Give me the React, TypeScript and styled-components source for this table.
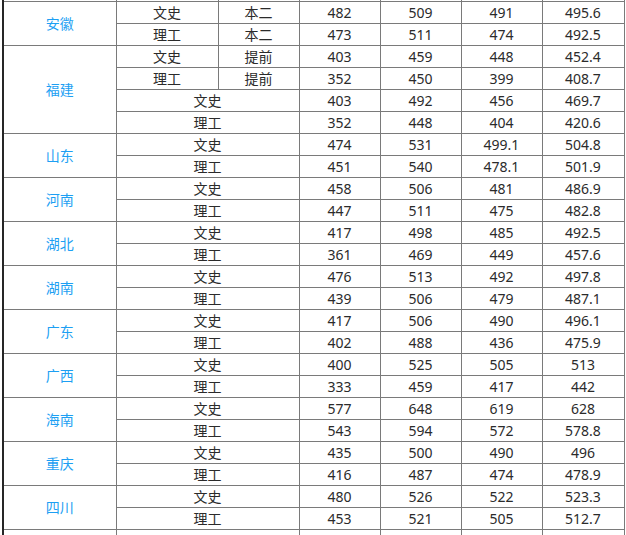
import React from 'react'
import styled, { createGlobalStyle } from 'styled-components'

interface Line {
  subject: string
  batch?: string
  scores: string[]
}

interface Province {
  name: string
  lines: Line[]
}

const GlobalStyle = createGlobalStyle`
  html, body {
    margin: 0;
    padding: 0;
    background: #fff;
    overflow: hidden;
  }
  body {
    font-family: "Noto Sans", "Noto Sans CJK SC", sans-serif;
  }
`

const Frame = styled.div`
  width: 626px;
  height: 535px;
  overflow: hidden;
  padding-left: 2px;
  box-sizing: border-box;
`

const Sheet = styled.div`
  border-left: 2px solid #262626;
  width: 621px;
  overflow: hidden;
`

const Table = styled.table`
  border-collapse: collapse;
  table-layout: fixed;
  width: 620px;
  margin-top: -21px;
  color: #2b2b2b;
  font-size: 14px;
  line-height: 16px;
`

const Cell = styled.td<{ $area?: boolean }>`
  border: 1px solid #7a7a7a;
  height: 21px;
  padding: 0;
  text-align: center;
  vertical-align: middle;
  box-sizing: border-box;
  white-space: nowrap;
  color: ${({ $area }) => ($area ? '#1d9ff3' : 'inherit')};

  &:first-child {
    border-left: 0;
  }
`

const Row = styled.tr`
  height: 22px;
`

// first and last entries are the rows cut by the window edges: only their lines show
const provinces: Province[] = [
  {
    name: '',
    lines: [{ subject: '', batch: '', scores: ['', '', '', ''] }],
  },
  {
    name: '安徽',
    lines: [
      { subject: '文史', batch: '本二', scores: ['482', '509', '491', '495.6'] },
      { subject: '理工', batch: '本二', scores: ['473', '511', '474', '492.5'] },
    ],
  },
  {
    name: '福建',
    lines: [
      { subject: '文史', batch: '提前', scores: ['403', '459', '448', '452.4'] },
      { subject: '理工', batch: '提前', scores: ['352', '450', '399', '408.7'] },
      { subject: '文史', scores: ['403', '492', '456', '469.7'] },
      { subject: '理工', scores: ['352', '448', '404', '420.6'] },
    ],
  },
  {
    name: '山东',
    lines: [
      { subject: '文史', scores: ['474', '531', '499.1', '504.8'] },
      { subject: '理工', scores: ['451', '540', '478.1', '501.9'] },
    ],
  },
  {
    name: '河南',
    lines: [
      { subject: '文史', scores: ['458', '506', '481', '486.9'] },
      { subject: '理工', scores: ['447', '511', '475', '482.8'] },
    ],
  },
  {
    name: '湖北',
    lines: [
      { subject: '文史', scores: ['417', '498', '485', '492.5'] },
      { subject: '理工', scores: ['361', '469', '449', '457.6'] },
    ],
  },
  {
    name: '湖南',
    lines: [
      { subject: '文史', scores: ['476', '513', '492', '497.8'] },
      { subject: '理工', scores: ['439', '506', '479', '487.1'] },
    ],
  },
  {
    name: '广东',
    lines: [
      { subject: '文史', scores: ['417', '506', '490', '496.1'] },
      { subject: '理工', scores: ['402', '488', '436', '475.9'] },
    ],
  },
  {
    name: '广西',
    lines: [
      { subject: '文史', scores: ['400', '525', '505', '513'] },
      { subject: '理工', scores: ['333', '459', '417', '442'] },
    ],
  },
  {
    name: '海南',
    lines: [
      { subject: '文史', scores: ['577', '648', '619', '628'] },
      { subject: '理工', scores: ['543', '594', '572', '578.8'] },
    ],
  },
  {
    name: '重庆',
    lines: [
      { subject: '文史', scores: ['435', '500', '490', '496'] },
      { subject: '理工', scores: ['416', '487', '474', '478.9'] },
    ],
  },
  {
    name: '四川',
    lines: [
      { subject: '文史', scores: ['480', '526', '522', '523.3'] },
      { subject: '理工', scores: ['453', '521', '505', '512.7'] },
    ],
  },
  {
    name: '',
    lines: [
      { subject: '', scores: ['', '', '', ''] },
      { subject: '', scores: ['', '', '', ''] },
    ],
  },
]

const widths = [112, 102, 81, 81, 81, 81, 82]

const App = () => {
  return (
    <Frame>
      <GlobalStyle />
      <Sheet>
        <Table>
          <colgroup>
            {widths.map((w, i) => (
              <col key={i} style={{ width: w }} />
            ))}
          </colgroup>
          <tbody>
            {provinces.map((p, k) =>
              p.lines.map((line, i) => (
                <Row key={`${k}-${i}`}>
                  {i === 0 && (
                    <Cell $area rowSpan={p.lines.length}>
                      {p.name}
                    </Cell>
                  )}
                  {line.batch !== undefined ? (
                    <>
                      <Cell>{line.subject}</Cell>
                      <Cell>{line.batch}</Cell>
                    </>
                  ) : (
                    <Cell colSpan={2}>{line.subject}</Cell>
                  )}
                  {line.scores.map((s, j) => (
                    <Cell key={j}>{s}</Cell>
                  ))}
                </Row>
              ))
            )}
          </tbody>
        </Table>
      </Sheet>
    </Frame>
  )
}

export default App
